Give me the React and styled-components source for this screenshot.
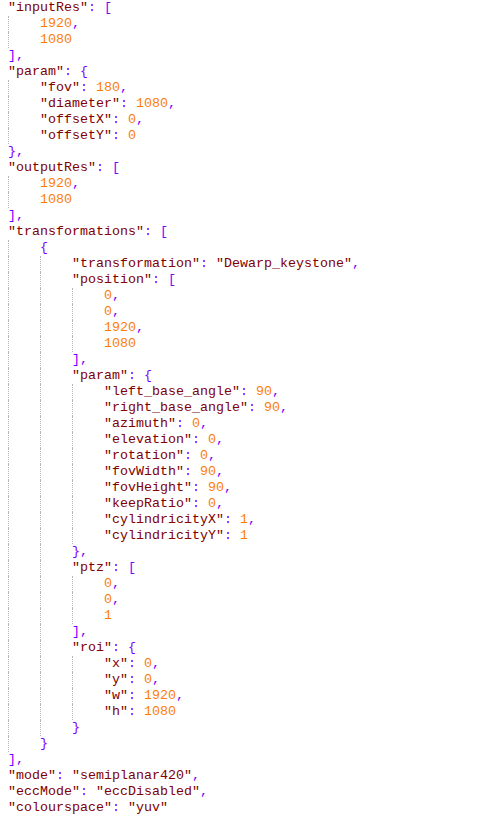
import React from "react";
import styled, { createGlobalStyle } from "styled-components";

const Global = createGlobalStyle`
  html, body { margin: 0; padding: 0; background: #ffffff; }
`;

const Code = styled.div`
  padding: 0 0 0 8px;
  font-family: "Liberation Mono", "DejaVu Sans Mono", monospace;
  font-size: 13.333px;
  line-height: 16px;
  white-space: pre;
  background: #ffffff;
`;

const Line = styled.div`
  display: flex;
  height: 16px;
`;

const Indent = styled.span`
  flex: 0 0 32px;
  width: 32px;
  box-sizing: border-box;
  border-left: 1px dotted #b4b4b4;
`;

const colors = {
  str: "#800000",
  num: "#ff8000",
  punct: "#8000ff",
};

const Tok = styled.span`
  color: ${(p) => colors[p.$kind]};
`;

const src = `{"inputRes": [
1920,
1080
],
"param": {
"fov": 180,
"diameter": 1080,
"offsetX": 0,
"offsetY": 0
},
"outputRes": [
1920,
1080
],
"transformations": [
{
"transformation": "Dewarp_keystone",
"position": [
0,
0,
1920,
1080
],
"param": {
"left_base_angle": 90,
"right_base_angle": 90,
"azimuth": 0,
"elevation": 0,
"rotation": 0,
"fovWidth": 90,
"fovHeight": 90,
"keepRatio": 0,
"cylindricityX": 1,
"cylindricityY": 1
},
"ptz": [
0,
0,
1
],
"roi": {
"x": 0,
"y": 0,
"w": 1920,
"h": 1080
}
}
],
"mode": "semiplanar420",
"eccMode": "eccDisabled",
"colourspace": "yuv"`;

const indents = [
  0, 1, 1, 0, 0, 1, 1, 1, 1, 0, 0, 1, 1, 0, 0, 1, 2, 2, 3, 3, 3, 3, 2, 2, 3,
  3, 3, 3, 3, 3, 3, 3, 3, 3, 2, 2, 3, 3, 3, 2, 2, 3, 3, 3, 3, 2, 1, 0, 0, 0, 0,
];

const lines = src.slice(1).split("\n");

function tokenize(text) {
  const out = [];
  const re = /("[^"]*")|(-?\d+(?:\.\d+)?)|([\[\]{}:,])|(\s+)/g;
  let m;
  while ((m = re.exec(text))) {
    if (m[1]) out.push({ k: "str", t: m[1] });
    else if (m[2]) out.push({ k: "num", t: m[2] });
    else if (m[3]) out.push({ k: "punct", t: m[3] });
    else out.push({ k: "punct", t: m[4] });
  }
  return out;
}

export default function App() {
  return (
    <>
      <Global />
      <Code>
        {lines.map((text, i) => (
          <Line key={i}>
            {Array.from({ length: indents[i] }).map((_, k) => (
              <Indent key={k} />
            ))}
            <span>
              {tokenize(text).map((tk, j) => (
                <Tok key={j} $kind={tk.k}>
                  {tk.t}
                </Tok>
              ))}
            </span>
          </Line>
        ))}
      </Code>
    </>
  );
}
